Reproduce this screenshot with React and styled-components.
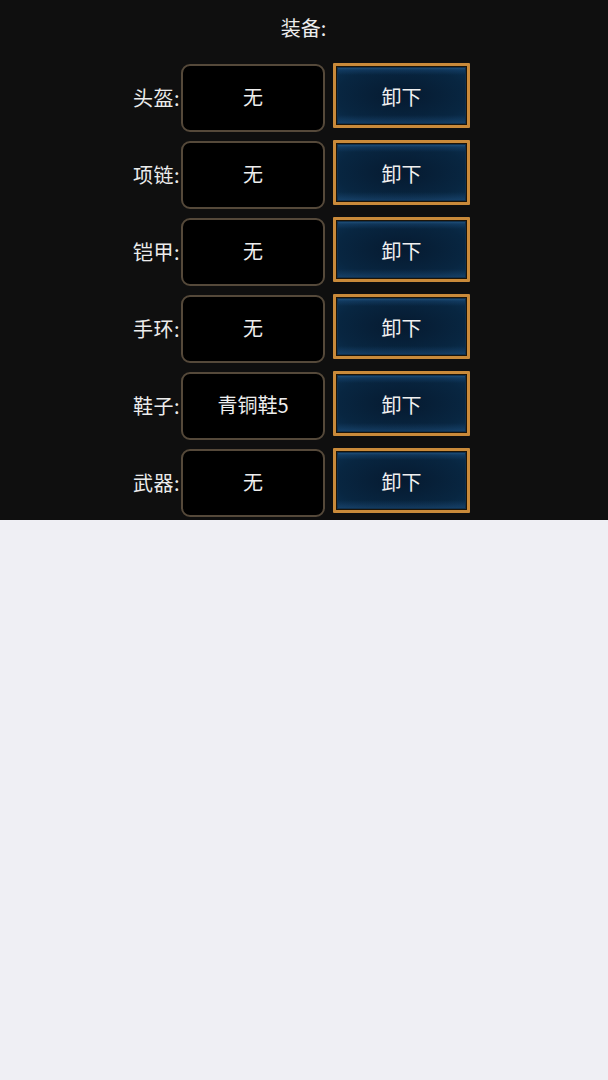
import React from 'react'
import styled, { createGlobalStyle } from 'styled-components';

const GlobalStyle = createGlobalStyle`
  html, body {
    margin: 0;
    padding: 0;
    background: #efeff4;
    font-family: "Noto Sans CJK SC", "Noto Sans", sans-serif;
  }
`;

const Panel = styled.div`
  background: #0f0f0f;
  height: 520px;
  box-sizing: border-box;
  padding-top: 64px;
  position: relative;
  color: #ececec;
`;

const Title = styled.div`
  position: absolute;
  top: 0;
  left: 0;
  right: 0;
  height: 54px;
  display: flex;
  align-items: center;
  justify-content: center;
  font-size: 20px;
  padding-right: 1px;
`;

const List = styled.div`
  display: flex;
  flex-direction: column;
  gap: 9px;
`;

const Row = styled.div`
  display: flex;
  align-items: center;
  justify-content: center;
  padding-right: 8px;
  height: 68px;
`;

const Label = styled.div`
  width: 50px;
  text-align: right;
  font-size: 20px;
  margin-right: 1px;
  padding-bottom: 2px;
  white-space: nowrap;
  letter-spacing: 0.5px;
`;

const Slot = styled.div`
  width: 144px;
  height: 68px;
  box-sizing: border-box;
  border: 2px solid #55493a;
  border-radius: 9px;
  background: #000;
  display: flex;
  align-items: center;
  justify-content: center;
  font-size: 20px;
  padding-bottom: 3px;
  color: #eeeeee;
`;

const Unequip = styled.button`
  margin-left: 8px;
  margin-top: -6px;
  width: 137px;
  height: 65px;
  box-sizing: border-box;
  border: 3px solid #c98a3a;
  border-radius: 1px;
  background:
    linear-gradient(180deg, rgba(70,140,200,0.55) 0px, rgba(40,100,160,0.25) 4px, transparent 9px),
    linear-gradient(0deg, rgba(50,110,170,0.35) 0px, transparent 10px),
    radial-gradient(ellipse at 50% 50%, #061a30 0%, #082641 70%, #0b3050 100%);
  box-shadow: inset 0 0 0 1px #1c1408, inset 0 0 0 2px #10304d;
  color: #f0f0f0;
  font-family: inherit;
  font-size: 20px;
  padding: 2px 0 0 0;
  display: flex;
  align-items: center;
  justify-content: center;
`;

const slots = [
  { name: '头盔', item: '无' },
  { name: '项链', item: '无' },
  { name: '铠甲', item: '无' },
  { name: '手环', item: '无' },
  { name: '鞋子', item: '青铜鞋5' },
  { name: '武器', item: '无' },
];

const App = () => {
  return (
    <>
      <GlobalStyle />
      <Panel>
        <Title>装备:</Title>
        <List>
          {slots.map(s => (
            <Row key={s.name}>
              <Label>{s.name}:</Label>
              <Slot>{s.item}</Slot>
              <Unequip>卸下</Unequip>
            </Row>
          ))}
        </List>
      </Panel>
    </>
  )
}

export default App;
